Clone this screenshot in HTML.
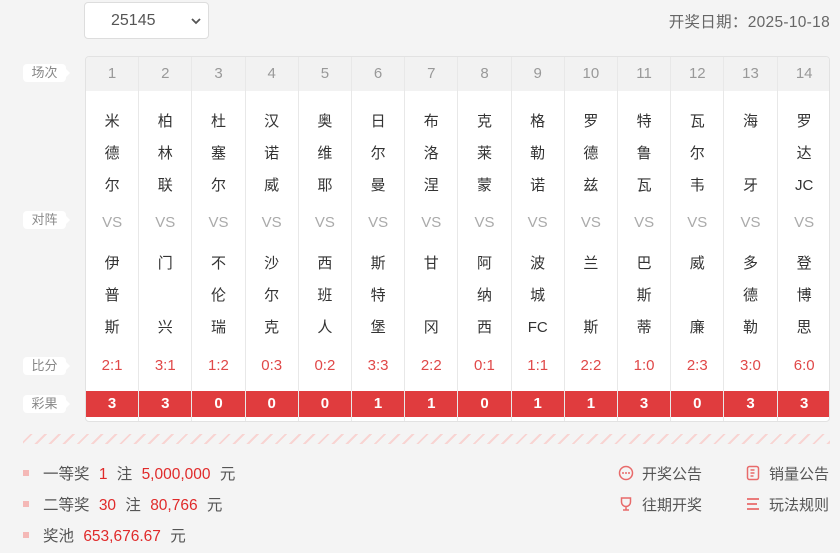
<!DOCTYPE html>
<html><head><meta charset="utf-8"><style>
*{margin:0;padding:0;box-sizing:border-box}
body{width:840px;height:553px;background:#f4f4f4;font-family:"Liberation Sans","Noto Sans CJK SC",sans-serif;position:relative;overflow:hidden;color:#333}
.sel{position:absolute;left:84px;top:2px;width:125px;height:37px;background:#fff;border:1px solid #ddd;border-radius:4px;font-size:16px;color:#555;line-height:35px;padding-left:26px}
.sel svg{position:absolute;right:6px;top:14px}
.date{position:absolute;right:10px;top:10px;font-size:15.5px;color:#666;letter-spacing:0.3px}
.tbl{position:absolute;left:85px;top:56px;width:745px;height:366px;background:#fff;border:1px solid #e2e2e2;border-radius:4px;overflow:hidden}
.hd{position:absolute;left:0;top:0;width:100%;height:34px;background:#f2f2f2}
.col{position:absolute;top:0;height:100%;width:53.2px;border-right:1px solid #e8e8e8;text-align:center}
.num{position:absolute;top:0;width:100%;height:34px;line-height:34px;font-size:15px;color:#999}
.nm{position:absolute;left:0;width:100%;display:flex;flex-direction:column;justify-content:space-between;align-items:center;font-size:15px;color:#333;line-height:22px}
.h{top:54px;height:86px}.a{top:196px;height:86px}
.vs{position:absolute;top:155px;width:100%;font-size:15px;color:#aaa;line-height:22px}
.sc{position:absolute;top:298px;width:100%;font-size:15px;color:#e04848;line-height:22px}
.rs{position:absolute;top:334px;width:100%;height:26px;background:#e03c3e;color:#fff;font-weight:bold;font-size:15px;line-height:26px}
.lb{position:absolute;left:23px;width:43px;height:18px;background:#fff;border-radius:4px;font-size:13px;color:#888;text-align:center;line-height:18px}
.lb:after{content:"";position:absolute;right:-4px;top:5px;border-left:4px solid #fff;border-top:4px solid transparent;border-bottom:4px solid transparent}
.stripe{position:absolute;left:23px;top:434px;width:807px;height:10px;background:repeating-linear-gradient(135deg,transparent 0 5px,#f8d4d2 5px 7px,transparent 7px 10px)}
.pr{position:absolute;left:23px;font-size:15.5px;color:#555;word-spacing:5px}
.pr:before{content:"";display:inline-block;width:6px;height:6px;background:#f4b8b6;margin-right:14px;vertical-align:3px}
.r{color:#e02a2a}
.lk{position:absolute;font-size:15px;color:#555}
.lk svg{position:absolute;left:-24px;top:2px}
</style></head><body>
<div class="sel">25145<svg width="12" height="8" viewBox="0 0 12 8"><path d="M2 2l4 4 4-4" stroke="#555" stroke-width="1.8" fill="none"/></svg></div>
<div class="date">开奖日期：2025-10-18</div>
<div class="lb" style="top:64px">场次</div>
<div class="lb" style="top:211px">对阵</div>
<div class="lb" style="top:357px">比分</div>
<div class="lb" style="top:395px">彩果</div>
<div class="tbl"><div class="hd"></div>
<div class="col" style="left:0"><div class="num">1</div><div class="nm h"><span>米</span><span>德</span><span>尔</span></div><div class="vs">VS</div><div class="nm a"><span>伊</span><span>普</span><span>斯</span></div><div class="sc">2:1</div><div class="rs">3</div></div>
<div class="col" style="left:53.2px"><div class="num">2</div><div class="nm h"><span>柏</span><span>林</span><span>联</span></div><div class="vs">VS</div><div class="nm a"><span>门</span><span>兴</span></div><div class="sc">3:1</div><div class="rs">3</div></div>
<div class="col" style="left:106.4px"><div class="num">3</div><div class="nm h"><span>杜</span><span>塞</span><span>尔</span></div><div class="vs">VS</div><div class="nm a"><span>不</span><span>伦</span><span>瑞</span></div><div class="sc">1:2</div><div class="rs">0</div></div>
<div class="col" style="left:159.6px"><div class="num">4</div><div class="nm h"><span>汉</span><span>诺</span><span>威</span></div><div class="vs">VS</div><div class="nm a"><span>沙</span><span>尔</span><span>克</span></div><div class="sc">0:3</div><div class="rs">0</div></div>
<div class="col" style="left:212.8px"><div class="num">5</div><div class="nm h"><span>奥</span><span>维</span><span>耶</span></div><div class="vs">VS</div><div class="nm a"><span>西</span><span>班</span><span>人</span></div><div class="sc">0:2</div><div class="rs">0</div></div>
<div class="col" style="left:266px"><div class="num">6</div><div class="nm h"><span>日</span><span>尔</span><span>曼</span></div><div class="vs">VS</div><div class="nm a"><span>斯</span><span>特</span><span>堡</span></div><div class="sc">3:3</div><div class="rs">1</div></div>
<div class="col" style="left:319.2px"><div class="num">7</div><div class="nm h"><span>布</span><span>洛</span><span>涅</span></div><div class="vs">VS</div><div class="nm a"><span>甘</span><span>冈</span></div><div class="sc">2:2</div><div class="rs">1</div></div>
<div class="col" style="left:372.4px"><div class="num">8</div><div class="nm h"><span>克</span><span>莱</span><span>蒙</span></div><div class="vs">VS</div><div class="nm a"><span>阿</span><span>纳</span><span>西</span></div><div class="sc">0:1</div><div class="rs">0</div></div>
<div class="col" style="left:425.6px"><div class="num">9</div><div class="nm h"><span>格</span><span>勒</span><span>诺</span></div><div class="vs">VS</div><div class="nm a"><span>波</span><span>城</span><span>FC</span></div><div class="sc">1:1</div><div class="rs">1</div></div>
<div class="col" style="left:478.8px"><div class="num">10</div><div class="nm h"><span>罗</span><span>德</span><span>兹</span></div><div class="vs">VS</div><div class="nm a"><span>兰</span><span>斯</span></div><div class="sc">2:2</div><div class="rs">1</div></div>
<div class="col" style="left:532px"><div class="num">11</div><div class="nm h"><span>特</span><span>鲁</span><span>瓦</span></div><div class="vs">VS</div><div class="nm a"><span>巴</span><span>斯</span><span>蒂</span></div><div class="sc">1:0</div><div class="rs">3</div></div>
<div class="col" style="left:585.2px"><div class="num">12</div><div class="nm h"><span>瓦</span><span>尔</span><span>韦</span></div><div class="vs">VS</div><div class="nm a"><span>威</span><span>廉</span></div><div class="sc">2:3</div><div class="rs">0</div></div>
<div class="col" style="left:638.4px"><div class="num">13</div><div class="nm h"><span>海</span><span>牙</span></div><div class="vs">VS</div><div class="nm a"><span>多</span><span>德</span><span>勒</span></div><div class="sc">3:0</div><div class="rs">3</div></div>
<div class="col" style="left:691.6px;border-right:0"><div class="num">14</div><div class="nm h"><span>罗</span><span>达</span><span>JC</span></div><div class="vs">VS</div><div class="nm a"><span>登</span><span>博</span><span>思</span></div><div class="sc">6:0</div><div class="rs">3</div></div>
</div>
<div class="stripe"></div>
<div class="pr" style="top:462px">一等奖 <span class="r">1</span> 注 <span class="r">5,000,000</span> 元</div>
<div class="pr" style="top:493px">二等奖 <span class="r">30</span> 注 <span class="r">80,766</span> 元</div>
<div class="pr" style="top:524px">奖池 <span class="r">653,676.67</span> 元</div>
<div class="lk" style="left:642px;top:463px"><svg width="16" height="16" viewBox="0 0 16 16"><circle cx="8" cy="8" r="6.5" stroke="#e86a6a" stroke-width="1.5" fill="none"/><circle cx="5" cy="8" r="1" fill="#e86a6a"/><circle cx="8" cy="8" r="1" fill="#e86a6a"/><circle cx="11" cy="8" r="1" fill="#e86a6a"/></svg>开奖公告</div>
<div class="lk" style="left:642px;top:494px"><svg width="16" height="16" viewBox="0 0 16 16"><path d="M3.5 2h9v4a4.5 4.5 0 0 1-9 0z M8 10.5v3 M5 14h6" stroke="#e86a6a" stroke-width="1.5" fill="none"/></svg>往期开奖</div>
<div class="lk" style="left:769px;top:463px"><svg width="16" height="16" viewBox="0 0 16 16"><rect x="2.5" y="1.5" width="11" height="13" rx="2" stroke="#e86a6a" stroke-width="1.5" fill="none"/><path d="M5.5 5h4M5.5 8h4M5.5 11h3" stroke="#e86a6a" stroke-width="1.4"/></svg>销量公告</div>
<div class="lk" style="left:769px;top:494px"><svg width="16" height="16" viewBox="0 0 16 16"><path d="M2 3h12M2 8h10M2 13h12" stroke="#e86a6a" stroke-width="1.8"/></svg>玩法规则</div>
</body></html>
